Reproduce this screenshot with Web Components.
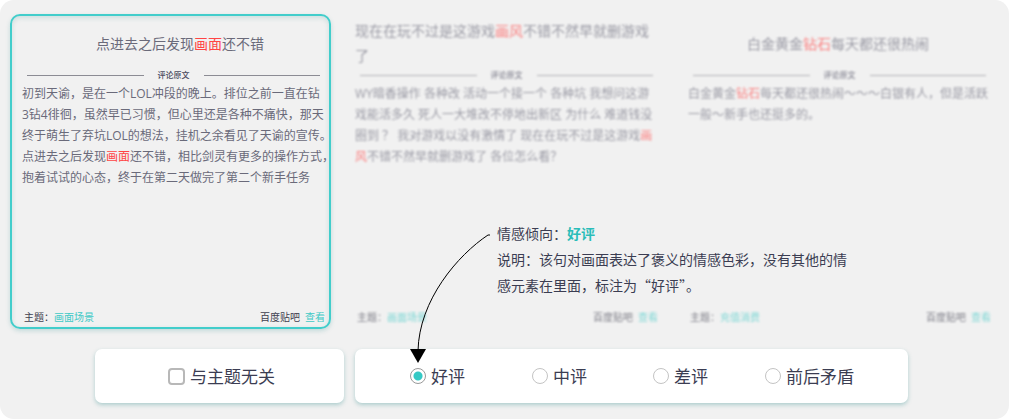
<!DOCTYPE html>
<html lang="zh-CN">
<head>
<meta charset="utf-8">
<meta name="viewport" content="width=device-width, initial-scale=1">
<title>评论标注</title>
<style>
  body { margin: 0; background: #fff; font-family: "Noto Sans CJK SC", sans-serif; }
</style>
</head>
<body>
<review-board>
  <review-card selected>
    <span slot="title">点进去之后发现<key-word>画面</key-word>还不错</span>
    初到天谕，是在一个LOL冲段的晚上。排位之前一直在钻<br>3钻4徘徊，虽然早已习惯，但心里还是各种不痛快，那天<br>终于萌生了弃坑LOL的想法，挂机之余看见了天谕的宣传。<br>点进去之后发现<key-word>画面</key-word>还不错，相比剑灵有更多的操作方式，<br>抱着试试的心态，终于在第二天做完了第二个新手任务
    <span slot="topic">画面场景</span>
  </review-card>
  <review-card dimmed>
    <span slot="title">现在在玩不过是这游戏<key-word>画风</key-word>不错不然早就删游戏了</span>
    WY暗香操作 各种改 活动一个接一个 各种坑 我想问这游<br>戏能活多久 死人一大堆改不停地出新区 为什么 难道钱没<br>圈到 ？ 我对游戏以没有激情了 现在在玩不过是这游戏<key-word>画</key-word><br><key-word>风</key-word>不错不然早就删游戏了 各位怎么看？
    <span slot="topic">画面场景</span>
  </review-card>
  <review-card dimmed>
    <span slot="title">白金黄金<key-word>钻石</key-word>每天都还很热闹</span>
    白金黄金<key-word>钻石</key-word>每天都还很热闹～～～白银有人，但是活跃<br>一般～新手也还挺多的。
    <span slot="topic">充值消费</span>
  </review-card>
  <irrelevant-option slot="actions"></irrelevant-option>
  <sentiment-options slot="actions"></sentiment-options>
  <sentiment-note slot="note"><span slot="value">好评</span>该句对画面表达了褒义的情感色彩，没有其他的情感元素在里面，标注为“好评”。</sentiment-note>
</review-board>

<script>
  const define = (name, html) => customElements.define(name, class extends HTMLElement {
    constructor() {
      super();
      this.attachShadow({ mode: 'open' }).innerHTML = html.trim();
    }
  });

  define('key-word', `<style>:host { display: inline; color: #ff4444; }</style><slot></slot>`);

  define('review-board', `
    <style>
      :host { display: block; }
      main { position: relative; background: #f1f1f1; border-radius: 14px; padding: 14px 12px 16px 10px; }
      .cards { display: grid; grid-template-columns: repeat(3, minmax(0, 1fr)); gap: 12px; }
      .actions { display: grid; grid-template-columns: 249fr 553fr; gap: 11px; margin: 20px 89px 0 85px; }
    </style>
    <main>
      <div class="cards"><slot></slot></div>
      <div class="actions"><slot name="actions"></slot></div>
      <slot name="note"></slot>
    </main>`);

  define('review-card', `
    <style>
      :host { display: block; color: #6a6a7a; }
      article {
        box-sizing: border-box; min-height: 315px; height: 100%;
        display: flex; flex-direction: column;
        border: 2px solid transparent; border-radius: 10px; padding: 2px 4px 1px 10px;
      }
      :host([selected]) article {
        border-color: #42cdcb;
        box-shadow: 0 2px 4px rgba(60, 150, 150, .25), inset 0 2px 5px rgba(60, 150, 150, .2);
      }
      :host([dimmed]) article { filter: blur(1px); opacity: .65; }
      h2 {
        margin: 0; min-height: 50px; padding-right: 3px;
        display: flex; align-items: center; justify-content: center;
        font-size: 14px; line-height: 25px; font-weight: 400;
      }
      :host([selected]) h2 { padding-left: 16px; }
      .rule {
        display: grid; grid-template-columns: 1fr auto 1fr; align-items: center; gap: 14px;
        margin: 1px 5px 0; font-size: 8px; line-height: 12px; color: #4a4a5e; font-weight: 500;
      }
      .rule::before, .rule::after { content: ""; height: 1px; background: #8c8c94; }
      h3 { margin: 0; font: inherit; }
      p { margin: 2px 0 0; flex: 1; font-family: "Open Sans", "Noto Sans CJK SC", sans-serif; font-size: 12px; line-height: 21px; white-space: nowrap; }
      footer { display: flex; justify-content: space-between; padding-left: 2px; font-size: 10px; line-height: 18px; color: #40404f; }
      .topic, a { color: #3fc9c6; }
      a { text-decoration: none; margin-left: 5px; }
    </style>
    <article>
      <h2><slot name="title"></slot></h2>
      <div class="rule"><h3>评论原文</h3></div>
      <p><slot></slot></p>
      <footer>
        <span>主题：<span class="topic"><slot name="topic"></slot></span></span>
        <span>百度贴吧<a href="#">查看</a></span>
      </footer>
    </article>`);

  const panel = `
    :host { display: block; }
    .panel {
      box-sizing: border-box; min-height: 54px; height: 100%; background: #fff; border-radius: 7px;
      box-shadow: 0 2px 4px rgba(50, 140, 140, .35); color: #3b3d52; font-size: 17px; line-height: 26px;
    }
    label { display: flex; align-items: center; gap: 5px; white-space: nowrap; }
    input { appearance: none; box-sizing: border-box; margin: 0; flex: none; background: #fff; }`;

  define('irrelevant-option', `
    <style>${panel}
      .panel { display: flex; align-items: center; justify-content: center; padding-left: 4px; }
      input { width: 17px; height: 17px; border: 2px solid #b8b8b8; border-radius: 4px; }
      input:checked { background: #35c6c3; }
    </style>
    <div class="panel"><label><input type="checkbox">与主题无关</label></div>`);

  define('sentiment-options', `
    <style>${panel}
      .panel { display: grid; grid-template-columns: 122fr 121fr 112fr 143fr; align-items: center; padding-left: 55px; }
      input { width: 16px; height: 16px; border: 1px solid #c4c4c4; border-radius: 50%; }
      input:checked {
        border-color: #999;
        background: radial-gradient(circle, #35c9c5 0 4px, #fff 5px);
      }
    </style>
    <div class="panel" role="radiogroup" aria-label="情感倾向">
      <label><input type="radio" name="mood" checked>好评</label>
      <label><input type="radio" name="mood">中评</label>
      <label><input type="radio" name="mood">差评</label>
      <label><input type="radio" name="mood">前后矛盾</label>
    </div>`);

  define('sentiment-note', `
    <style>
      :host { position: absolute; left: 410px; top: 220px; display: flex; gap: 6px; color: #3b3d52; font-size: 14px; line-height: 26px; }
      svg { flex: none; width: 81px; height: 143px; }
      div { width: 352px; }
      p { margin: 0; }
      strong { color: #2abdb9; }
    </style>
    <svg viewBox="0 0 81 143" aria-hidden="true">
      <path d="M80 15H78C48 35 9 80 8 131" fill="none" stroke="#000"/>
      <path d="M0 129H16L8 143Z"/>
    </svg>
    <div>
      <p>情感倾向：<strong><slot name="value"></slot></strong></p>
      <p>说明：<slot></slot></p>
    </div>`);
</script>
</body>
</html>
